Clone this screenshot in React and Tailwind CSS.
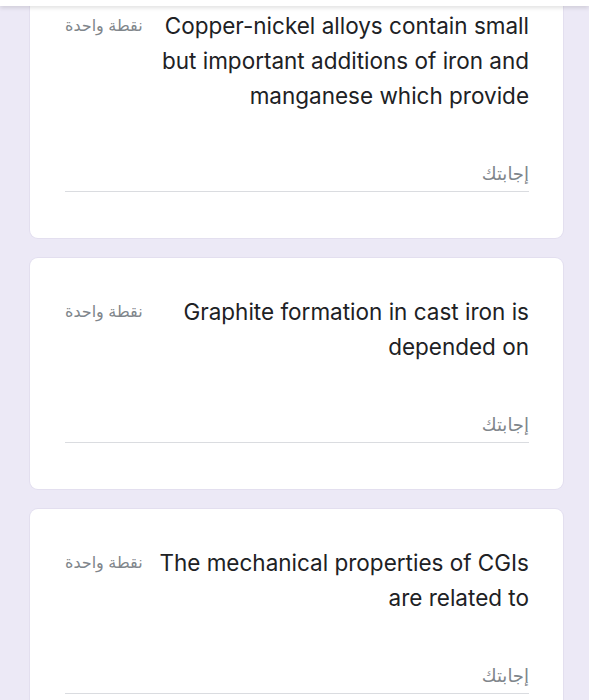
import React from "react";

const questions = [
  "Copper-nickel alloys contain small but important additions of iron and manganese which provide",
  "Graphite formation in cast iron is depended on",
  "The mechanical properties of CGIs are related to",
];

export default function App() {
  return (
    <div
      className="h-[700px] overflow-hidden bg-[#ece9f6]"
      style={{ fontFamily: "Inter, 'DejaVu Sans', sans-serif" }}
    >
      {/* top bar edge */}
      <div className="sticky top-0 z-10 h-[6px] bg-white shadow-[0_2px_4px_rgba(0,0,0,0.12)]" />

      {/* question cards */}
      <div className="mt-[-34px] flex flex-col gap-5 pl-[30px] pr-[26px]">
        {questions.map((q, i) => (
          <div
            key={i}
            dir="rtl"
            className="rounded-lg bg-white pt-[36px] pb-[46px] pl-[35px] pr-[34px] shadow-[0_0_0_1px_rgba(60,40,120,0.05)]"
          >
            <div className="flex items-start justify-between">
              <div className="w-[380px] text-[22.5px] leading-[35px] text-[#202124]">{q}</div>
              <div className="shrink-0 text-[16px] leading-[35px] text-[#80868b]">نقطة واحدة</div>
            </div>

            {/* answer field */}
            <div className="mt-[49px] border-b border-[#dadce0] pb-[5px] text-[18px] leading-[24px] text-[#80868b]">
              إجابتك
            </div>
          </div>
        ))}
      </div>
    </div>
  );
}
